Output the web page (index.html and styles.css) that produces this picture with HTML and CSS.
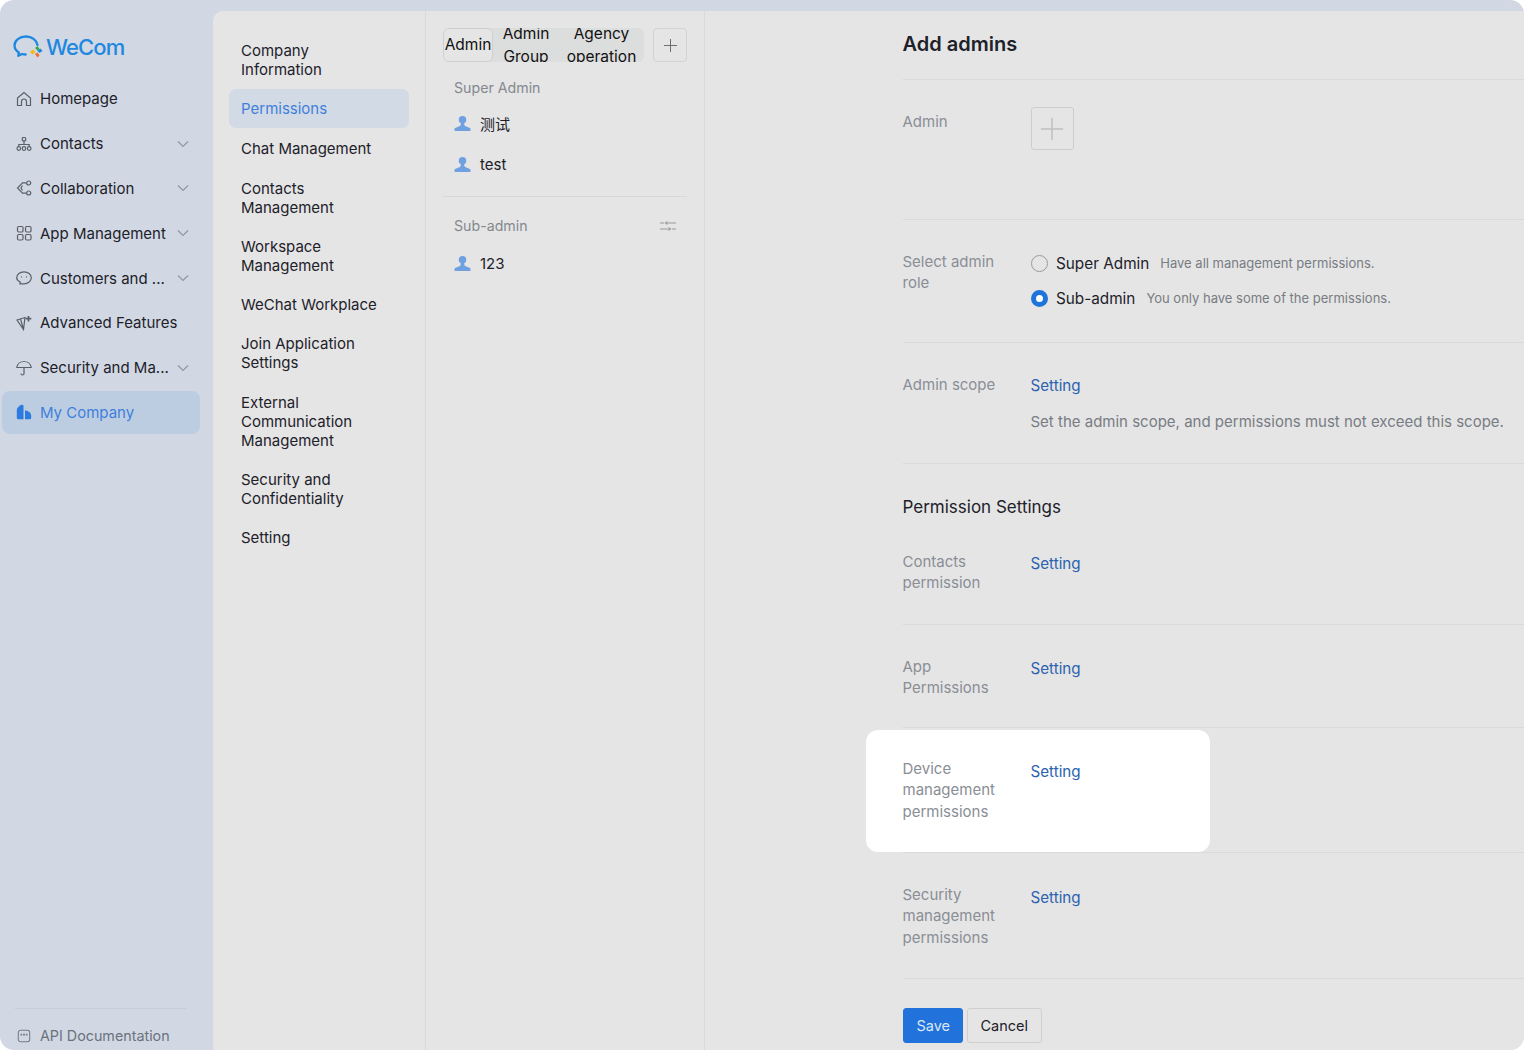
FILE: index.html
```html
<!DOCTYPE html>
<html lang="en">
<head>
  <meta charset="UTF-8">
  <title>WeCom - Add admins</title>
  <link rel="stylesheet" href="styles.css">
</head>
<body>
  <div class="frame">
    <aside class="sidebar">
      <div class="logo">
        <svg class="logo-icon" width="30" height="24" viewBox="0 0 30 24">
          <path d="M24.500 10C23.500 5 19 1.500 13 1.500 6.500 1.500 1.500 5.500 1.500 10.500c0 3 1.700 5.400 4.300 7l-.5 3.300 3.700-1.800c1.200.4 2.400.5 3.700.5" fill="none" stroke="#1e88e0" stroke-width="2.300" stroke-linecap="round" stroke-linejoin="round"/>
          <path d="M22 13l2.500-2 2.500 3.500-2 1.500z" fill="#3aa845"/>
          <path d="M24.500 16l3-2.500 2 2.500-3 2z" fill="#1e88e0"/>
          <path d="M22.500 17l-3 2.500-2.500-2.500 3-2.500z" fill="#f5b915"/>
          <path d="M22 19l2.500-1.500 2 3-2 2z" fill="#ee6b2f"/>
        </svg>
        <span class="logo-text">WeCom</span>
      </div>
      <nav class="side-nav">
        <a class="side-item">
          <svg class="side-icon" viewBox="0 0 16 16"><path d="M1.500 7l6.500-5.500L14.500 7v7.500H10.500V10.500a2.500 2.500 0 0 0-5 0v4H1.500z"/></svg>
          <span class="side-label">Homepage</span>
        </a>
        <a class="side-item">
          <svg class="side-icon" viewBox="0 0 16 16"><rect x="6.300" y="1.500" width="3.400" height="3.400" rx="1"/><path d="M8 5v3.500M2.800 10.500V8.500h10.400v2"/><circle cx="2.800" cy="12.500" r="1.800"/><circle cx="8" cy="12.500" r="1.800"/><circle cx="13.200" cy="12.500" r="1.800"/></svg>
          <span class="side-label">Contacts</span>
          <svg class="chevron" viewBox="0 0 12 8"><path d="M1 1.500l5 5 5-5"/></svg>
        </a>
        <a class="side-item">
          <svg class="side-icon" viewBox="0 0 16 16"><path d="M10.500 2.800H6.500L1.500 8l5 5.200h4"/><circle cx="12.700" cy="3" r="2"/><circle cx="12.700" cy="13" r="2"/><path d="M6.500 5.500L5 8l1.500 2.500"/></svg>
          <span class="side-label">Collaboration</span>
          <svg class="chevron" viewBox="0 0 12 8"><path d="M1 1.500l5 5 5-5"/></svg>
        </a>
        <a class="side-item">
          <svg class="side-icon" viewBox="0 0 16 16"><rect x="1.500" y="1.500" width="5.500" height="5.500" rx="1.200"/><rect x="9.500" y="1.500" width="5.500" height="5.500" rx="1.200"/><rect x="1.500" y="9.500" width="5.500" height="5.500" rx="1.200"/><rect x="9.500" y="9.500" width="5.500" height="5.500" rx="1.200"/></svg>
          <span class="side-label">App Management</span>
          <svg class="chevron" viewBox="0 0 12 8"><path d="M1 1.500l5 5 5-5"/></svg>
        </a>
        <a class="side-item">
          <svg class="side-icon" viewBox="0 0 16 16"><path d="M8 1.800c4 0 7.300 2.600 7.300 6s-3.300 6-7.300 6H4l.3-1.700C2.100 11 .7 9.600.7 7.800c0-3.400 3.300-6 7.300-6z"/><path d="M5 6.800h.9M10.100 6.800h.9"/></svg>
          <span class="side-label">Customers and ...</span>
          <svg class="chevron" viewBox="0 0 12 8"><path d="M1 1.500l5 5 5-5"/></svg>
        </a>
        <a class="side-item">
          <svg class="side-icon" viewBox="0 0 16 16"><path d="M1 5l8-2.500-1.500 12zM4.500 3.800L7.500 14.500"/><path d="M12.500 1v5.500M9.800 3.700h5.500" stroke-width="1.700"/></svg>
          <span class="side-label">Advanced Features</span>
        </a>
        <a class="side-item">
          <svg class="side-icon" viewBox="0 0 16 16"><path d="M.8 7.500C1.300 4 4.300 1.500 8 1.500s6.700 2.500 7.200 6zM8 1v1M8 7.500v6a1.500 1.500 0 0 1-3 0"/></svg>
          <span class="side-label">Security and Ma...</span>
          <svg class="chevron" viewBox="0 0 12 8"><path d="M1 1.500l5 5 5-5"/></svg>
        </a>
        <a class="side-item active">
          <svg class="side-icon solid" viewBox="0 0 16 16"><path d="M.8 6.500C.8 4 3 1.500 6 .8c.9-.2 1.500.3 1.500 1.200V15.300H2.300A1.500 1.500 0 0 1 .8 13.800z"/><path d="M9 6.500c3.300 0 6.200 2.300 6.200 5.300v2a1.500 1.500 0 0 1-1.500 1.500H9z"/></svg>
          <span class="side-label">My Company</span>
        </a>
      </nav>
      <div class="side-foot">
        <a class="side-item small">
          <svg class="side-icon" viewBox="0 0 16 16"><rect x="1.500" y="1.500" width="13" height="13" rx="2.500"/><path d="M4 6.500h8" stroke-width="2" stroke-dasharray="2 1"/></svg>
          <span class="side-label">API Documentation</span>
        </a>
      </div>
    </aside>

    <div class="panels">
      <ul class="sub-nav">
        <li>Company<br>Information</li>
        <li class="current">Permissions</li>
        <li>Chat Management</li>
        <li>Contacts<br>Management</li>
        <li>Workspace<br>Management</li>
        <li>WeChat Workplace</li>
        <li>Join Application<br>Settings</li>
        <li>External<br>Communication<br>Management</li>
        <li>Security and<br>Confidentiality</li>
        <li>Setting</li>
      </ul>

      <section class="admin-list">
        <div class="tabs-row">
          <div class="tabs">
            <span class="tab selected">Admin</span>
            <span class="tab group">Admin Group</span>
            <span class="tab agency">Agency operation</span>
          </div>
          <button class="add-tab">
            <svg width="13" height="13" viewBox="0 0 14 14"><path d="M7 0v14M0 7h14"/></svg>
          </button>
        </div>
        <div class="list-title">Super Admin</div>
        <div class="person first">
          <svg class="person-icon" viewBox="0 0 16 16"><circle cx="8" cy="4.500" r="3.500"/><path d="M6.500 7.500h3l.5 2.500 5.500 2.500V15H.5v-2.500L6 10z"/></svg>
          <span>测试</span>
        </div>
        <div class="person">
          <svg class="person-icon" viewBox="0 0 16 16"><circle cx="8" cy="4.500" r="3.500"/><path d="M6.500 7.500h3l.5 2.500 5.500 2.500V15H.5v-2.500L6 10z"/></svg>
          <span>test</span>
        </div>
        <div class="list-title sub">
          <span>Sub-admin</span>
          <svg class="sort-icon" width="16" height="12" viewBox="0 0 16 12"><path d="M0 3h4M8 3h8M0 9h8M12 9h4" fill="none"/><path d="M7.500 1v4L4.500 3zM8.500 7v4l3-2z" stroke="none"/></svg>
        </div>
        <div class="person first">
          <svg class="person-icon" viewBox="0 0 16 16"><circle cx="8" cy="4.500" r="3.500"/><path d="M6.500 7.500h3l.5 2.500 5.500 2.500V15H.5v-2.500L6 10z"/></svg>
          <span>123</span>
        </div>
      </section>

      <main class="content">
        <h1 class="page-title">Add admins</h1>

        <div class="row row-admin">
          <div class="row-label">Admin</div>
          <button class="add-admin">
            <svg width="22" height="22" viewBox="0 0 22 22"><path d="M11 0v22M0 11h22"/></svg>
          </button>
        </div>

        <div class="row row-role">
          <div class="row-label">Select admin role</div>
          <div class="roles">
            <div class="role">
              <span class="radio"></span>
              <span class="role-name">Super Admin</span>
              <span class="role-desc">Have all management permissions.</span>
            </div>
            <div class="role">
              <span class="radio checked"></span>
              <span class="role-name">Sub-admin</span>
              <span class="role-desc">You only have some of the permissions.</span>
            </div>
          </div>
        </div>

        <div class="row row-scope">
          <div class="row-label">Admin scope</div>
          <div>
            <a class="link">Setting</a>
            <p class="scope-note">Set the admin scope, and permissions must not exceed this scope.</p>
          </div>
        </div>

        <h2 class="section-title">Permission Settings</h2>

        <div class="row row-contacts">
          <div class="row-label">Contacts permission</div>
          <a class="link">Setting</a>
        </div>
        <div class="row row-app">
          <div class="row-label">App<br>Permissions</div>
          <a class="link">Setting</a>
        </div>
        <div class="row row-device">
          <div class="row-label">Device management permissions</div>
          <a class="link">Setting</a>
        </div>
        <div class="row row-security">
          <div class="row-label">Security management permissions</div>
          <a class="link">Setting</a>
        </div>

        <div class="actions">
          <button class="btn primary">Save</button>
          <button class="btn">Cancel</button>
        </div>
      </main>
    </div>
  </div>
</body>
</html>
```

FILE: styles.css
```css
* {
  box-sizing: border-box;
}
html, body {
  margin: 0;
  height: 100%;
  overflow: hidden;
  background-color: #fff;
}
body {
  font-family: Inter, "Noto Sans CJK SC", sans-serif;
  font-size: 15px;
  color: #1d2129;
}
.frame {
  display: flex;
  height: 1050px;
  background-color: #d1d8e3;
  border-radius: 14px;
  overflow: hidden;
}

/* Sidebar */
.sidebar {
  width: 213px;
  flex-shrink: 0;
  display: flex;
  flex-direction: column;
  padding: 0 13px 0 2px;
}
.logo {
  display: flex;
  align-items: center;
  height: 32px;
  margin: 31px 0 0 11px;
}
.logo-text {
  color: #1e88e0;
  font-size: 22px;
  font-weight: 500;
  letter-spacing: -0.9px;
  margin-left: 3px;
}
.side-nav {
  margin-top: 14.500px;
  flex: 1;
  display: flex;
  flex-direction: column;
}
.side-item {
  display: flex;
  align-items: center;
  height: 42.800px;
  margin-bottom: 2px;
  padding: 0 11px 0 14px;
  border-radius: 8px;
}
.side-icon {
  width: 16px;
  height: 16px;
  margin-right: 8px;
  flex-shrink: 0;
  fill: none;
  stroke: #5a6068;
  stroke-width: 1.200;
}
.side-icon.solid {
  fill: #2c7be0;
  stroke: none;
}
.side-label {
  flex: 1;
  white-space: nowrap;
}
.chevron {
  width: 12px;
  height: 8px;
  fill: none;
  stroke: #9298a1;
  stroke-width: 1.200;
}
.side-item.active {
  background-color: #bdcde1;
  color: #3f7fdc;
}
.side-foot {
  margin: 0 14px 0 13px;
  border-top: 1px solid #c5cdd8;
  padding-top: 12px;
}
.side-item.small {
  height: 29px;
  padding-left: 2px;
  font-size: 14.300px;
  color: #6a727d;
  margin: 0;
}
.side-item.small .side-icon {
  width: 14px;
  height: 14px;
  margin-right: 9px;
  stroke: #777e88;
}

/* Panels */
.panels {
  flex: 1;
  display: flex;
  margin-top: 11px;
  background-color: #e5e5e5;
  border-top-left-radius: 10px;
}
.sub-nav {
  width: 213px;
  flex-shrink: 0;
  margin: 0;
  padding: 30px 16px 0;
  list-style: none;
  border-right: 1px solid #dadada;
}
.sub-nav li {
  padding: 0 12px;
  margin-bottom: 20.100px;
  line-height: 19px;
}
.sub-nav li.current {
  background-color: #d2dae6;
  color: #3f7fdc;
  border-radius: 7px;
  padding: 10px 12px;
  margin: -10.500px 0 11px;
}
.sub-nav li.current + li {
  margin-bottom: 21.600px;
}

/* Admin list */
.admin-list {
  width: 279px;
  flex-shrink: 0;
  padding: 17px 17px 0;
  border-right: 1px solid #dadada;
}
.tabs-row {
  display: flex;
  justify-content: space-between;
}
.tabs {
  display: flex;
  width: 201px;
  height: 34px;
  background-color: #dcdddd;
  border-radius: 6px;
  color: #111;
  font-size: 15.500px;
  line-height: 23px;
  text-align: center;
  overflow: hidden;
}
.tab.selected {
  width: 50px;
  line-height: 32px;
  border: 1px solid #cfcfcf;
  border-radius: 6px;
  background-color: #e5e5e5;
}
.tab.group {
  width: 66px;
}
.tab.agency {
  width: 85px;
}
.tab.group, .tab.agency {
  margin-top: -6px;
}
.add-tab {
  width: 34px;
  height: 34px;
  padding: 0;
  display: flex;
  align-items: center;
  justify-content: center;
  background: none;
  border: 1px solid #d2d2d2;
  border-radius: 4px;
}
.add-tab svg path {
  stroke: #666;
  fill: none;
}
.list-title {
  color: #84888f;
  font-size: 14.200px;
  padding-left: 11px;
  margin: 15px 0 0;
  line-height: 22px;
}
.list-title.sub {
  display: flex;
  justify-content: space-between;
  align-items: center;
  margin-top: 11px;
  padding: 18px 11px 0;
  border-top: 1px solid #d8d8d8;
}
.sort-icon {
  stroke: #9a9a9a;
  fill: #9a9a9a;
}
.person {
  display: flex;
  align-items: center;
  height: 41px;
  padding-left: 11px;
  color: #1d2129;
}
.person.first {
  margin-top: 4px;
}
.list-title.sub + .person.first {
  margin-top: 6px;
}
.person-icon {
  width: 17px;
  height: 17px;
  margin-right: 9px;
  fill: #6fa0e0;
}

/* Content */
.content {
  flex: 1;
  padding-left: 197.500px;
}
.page-title {
  margin: 0;
  height: 69px;
  padding-top: 20px;
  font-size: 20px;
  line-height: 26px;
  font-weight: 600;
  color: #1d2129;
  border-bottom: 1px solid #dadada;
}
.row {
  display: flex;
  border-bottom: 1px solid #dadada;
  position: relative;
}
.row-label {
  width: 128px;
  flex-shrink: 0;
  padding-right: 28px;
  color: #8a8e95;
  line-height: 21.300px;
  margin-top: -1px;
}
.link {
  color: #2a62b0;
  line-height: 22px;
  font-size: 15.200px;
}
.row-admin {
  height: 140px;
  padding-top: 27px;
}
.row-admin .row-label {
  margin-top: 4px;
}
.add-admin {
  width: 43px;
  height: 43px;
  padding: 0;
  display: flex;
  align-items: center;
  justify-content: center;
  background: none;
  border: 1px solid #cdcdcd;
  border-radius: 3px;
}
.add-admin svg path {
  stroke: #c0c0c0;
  stroke-width: 1.500;
  fill: none;
}
.row-role {
  height: 123px;
  padding-top: 32px;
}
.roles {
  display: flex;
  flex-direction: column;
  gap: 12px;
}
.role {
  display: flex;
  align-items: center;
  height: 23px;
}
.role-name {
  font-size: 15.300px;
}
.radio {
  width: 17px;
  height: 17px;
  border: 1px solid #9a9a9a;
  border-radius: 50%;
  margin-right: 8.500px;
}
.radio.checked {
  border: 5px solid #1f74dc;
  background-color: #fff;
}
.role-desc {
  margin-left: 11px;
  font-size: 13px;
  color: #787c83;
  position: relative;
  top: -1px;
}
.row-scope {
  height: 121px;
  padding-top: 32px;
}
.scope-note {
  margin: 14px 0 0;
  color: #787c83;
  line-height: 22px;
  white-space: nowrap;
}
.section-title {
  margin: 0;
  padding-top: 31px;
  font-size: 17px;
  font-weight: 400;
  line-height: 24px;
  color: #1d2129;
}
.row-contacts {
  height: 106px;
  padding-top: 33px;
}
.row-app {
  height: 103px;
  padding-top: 32px;
}
.row-device {
  height: 125px;
  padding-top: 31px;
}
.row-device::before {
  content: "";
  position: absolute;
  left: -37px;
  top: 2px;
  width: 344px;
  height: 122px;
  background-color: #fff;
  border-radius: 12px;
}
.row-device > * {
  position: relative;
}
.row-security {
  height: 126px;
  padding-top: 32px;
}
.row-device .link, .row-security .link {
  margin-top: 2px;
}
.row-app .link, .row-contacts .link {
  margin-top: 1px;
}
.actions {
  display: flex;
  gap: 4px;
  padding-top: 29px;
}
.btn {
  height: 35px;
  padding: 0 13px;
  font: inherit;
  font-size: 14.500px;
  color: #1d2129;
  background: none;
  border: 1px solid #cfcfcf;
  border-radius: 3px;
}
.btn.primary {
  width: 60px;
  background-color: #2272dc;
  border-color: #2272dc;
  color: #dbe7f7;
}
```
